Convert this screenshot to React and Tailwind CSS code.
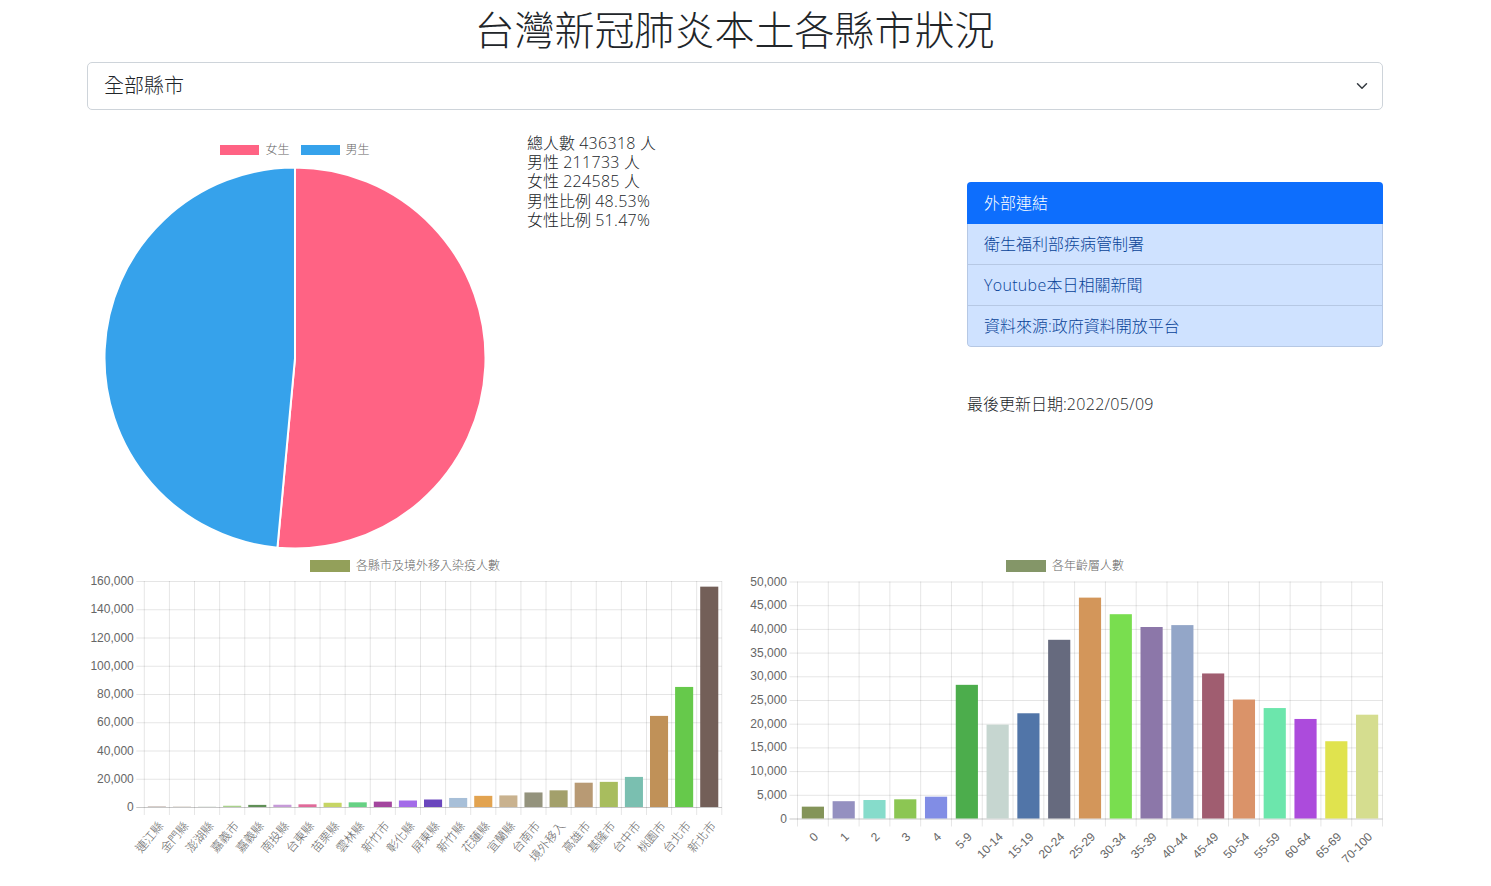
const FONT = "font-['Open_Sans','Noto_Sans_CJK_TC',sans-serif]";

const cityData = [
  ["連江縣", 300, "#a08a80"], ["金門縣", 200, "#b0a090"], ["澎湖縣", 150, "#a0b0a0"], ["嘉義市", 900, "#a9d28c"],
  ["嘉義縣", 1500, "#5f8f56"], ["南投縣", 1600, "#c69ad8"], ["台東縣", 1900, "#e06a9a"], ["苗栗縣", 3000, "#c6d565"],
  ["雲林縣", 3300, "#66d184"], ["新竹市", 3800, "#a3459e"], ["彰化縣", 4600, "#a36be8"], ["屏東縣", 5300, "#6a46bd"],
  ["新竹縣", 6400, "#a7bfd8"], ["花蓮縣", 7900, "#e2a350"], ["宜蘭縣", 8200, "#c9b28f"], ["台南市", 10300, "#94937d"],
  ["境外移入", 11800, "#a3a06b"], ["高雄市", 17200, "#b89a74"], ["基隆市", 17800, "#a8bd5e"], ["台中市", 21300, "#7abfb0"],
  ["桃園市", 64500, "#c09158"], ["台北市", 85000, "#66c94b"], ["新北市", 156000, "#735f58"],
];

const ageData = [
  ["0", 2500, "#849459"], ["1", 3650, "#9490c0"], ["2", 3900, "#86dccb"], ["3", 4050, "#8cc653"],
  ["4", 4600, "#818de5"], ["5-9", 28200, "#4cad4c"], ["10-14", 19800, "#c6d6d0"], ["15-19", 22200, "#5175a8"],
  ["20-24", 37700, "#666a7e"], ["25-29", 46600, "#d3965a"], ["30-34", 43100, "#79de4f"], ["35-39", 40400, "#8c77a9"],
  ["40-44", 40800, "#93a6c8"], ["45-49", 30600, "#a05d70"], ["50-54", 25100, "#da9369"], ["55-59", 23300, "#6ce6ac"],
  ["60-64", 21000, "#ac4bdc"], ["65-69", 16300, "#e0e34e"], ["70-100", 21900, "#d5dd8f"],
];

function Legend({ color, label, boxClass }) {
  return (
    <div className="flex items-center gap-[6px]">
      <span className={boxClass} style={{ backgroundColor: color }} />
      <span className="text-[12px] leading-none font-light text-[#666]">{label}</span>
    </div>
  );
}

function BarChart({ data, max, step, left, right, top, bottom, rotate, labelDx, labelDy, legendColor, legendLabel }) {
  const width = 636;
  const height = 311;
  const slot = (right - left) / data.length;
  const yOf = (v) => bottom - (v / max) * (bottom - top);
  const ticks = [];
  for (let v = 0; v <= max; v += step) ticks.push(v);
  return (
    <div className="flex flex-col">
      <div className="flex h-[20px] items-center justify-center pt-px">
        <Legend color={legendColor} label={legendLabel} boxClass="h-[12px] w-[40px]" />
      </div>
      <svg width={width} height={height} className="block">
        {ticks.map((v) => (
          <g key={v}>
            <line x1={left - 8} x2={right} y1={yOf(v) + 0.5} y2={yOf(v) + 0.5} stroke="#000" strokeOpacity={v === 0 ? 0.22 : 0.1} />
            <text x={left - 10.5} y={yOf(v) + 4} textAnchor="end" className="fill-[#666] text-[12px] font-['Liberation_Sans',sans-serif]">
              {v.toLocaleString("en-US")}
            </text>
          </g>
        ))}
        {data.map((_, i) => (
          <line key={i} x1={left + slot * i} x2={left + slot * i} y1={top} y2={bottom + 8} stroke="#000" strokeOpacity="0.1" />
        ))}
        <line x1={right} x2={right} y1={top} y2={bottom + 8} stroke="#000" strokeOpacity="0.1" />
        {data.map(([label, v, color], i) => {
          const cx = left + slot * (i + 0.5);
          const w = slot * 0.72;
          return (
            <rect key={label} x={cx - w / 2} y={yOf(v)} width={w} height={bottom - yOf(v)} fill={color} />
          );
        })}
        {data.map(([label], i) => {
          const cx = left + slot * (i + 0.5) + labelDx;
          const cy = bottom + labelDy;
          return (
            <text
              key={label}
              x={cx}
              y={cy}
              textAnchor="end"
              transform={`rotate(${rotate} ${cx} ${cy})`}
              className="fill-[#666] text-[12px] font-light font-['Liberation_Sans','Noto_Sans_CJK_TC',sans-serif]"
            >
              {label}
            </text>
          );
        })}
      </svg>
    </div>
  );
}

function Pie() {
  const cx = 208;
  const cy = 198;
  const r = 190.5;
  const a = 2 * Math.PI * 0.5147;
  const ex = cx + r * Math.sin(a);
  const ey = cy - r * Math.cos(a);
  return (
    <svg width="416" height="390" className="block">
      <path d={`M${cx} ${cy} L${cx} ${cy - r} A${r} ${r} 0 1 1 ${ex} ${ey} Z`} fill="#ff6384" stroke="#fff" strokeWidth="2" />
      <path d={`M${cx} ${cy} L${ex} ${ey} A${r} ${r} 0 0 1 ${cx} ${cy - r} Z`} fill="#36a2eb" stroke="#fff" strokeWidth="2" />
    </svg>
  );
}

function Num({ children }) {
  return <span className="tracking-[0.3px]">{children}</span>;
}

export default function App() {
  return (
    <div className={`h-[886px] w-[1491px] overflow-hidden bg-white text-[#212529] ${FONT}`}>
      <div className="ml-[87px] flex w-[1296px] flex-col">
        <h1 className="h-[62px] pr-px text-center text-[40px] leading-[60px] font-light">台灣新冠肺炎本土各縣市狀況</h1>

        <div className="relative h-[48px]">
          <select className={`h-full w-full appearance-none rounded-[5px] border border-[#ced4da] bg-white pl-[16px] text-[20px] font-light text-[#212529] ${FONT}`}>
            <option>全部縣市</option>
          </select>
          <svg viewBox="0 0 16 16" className="pointer-events-none absolute top-[18px] right-[14px] h-[12px] w-[14px]">
            <path d="M2 5l6 6 6-6" fill="none" stroke="#343a40" strokeWidth="2" strokeLinecap="round" strokeLinejoin="round" />
          </svg>
        </div>

        <div className="grid h-[445px] grid-cols-3 gap-x-[24px]">
          <div className="flex flex-col pt-[33px]">
            <div className="flex h-[14px] items-center justify-center gap-[11px]">
              <Legend color="#ff6384" label="女生" boxClass="h-[10px] w-[39px]" />
              <Legend color="#36a2eb" label="男生" boxClass="h-[10px] w-[39px]" />
            </div>
            <div className="mt-[3px]">
              <Pie />
            </div>
          </div>

          <div className="pt-[24px] text-[16px] leading-[19.2px] font-light">
            <p>總人數 <Num>436318</Num> 人</p>
            <p>男性 <Num>211733</Num> 人</p>
            <p>女性 <Num>224585</Num> 人</p>
            <p>男性比例 <Num>48.53%</Num></p>
            <p>女性比例 <Num>51.47%</Num></p>
          </div>

          <div className="flex flex-col pt-[72px]">
            <ul className="overflow-hidden rounded-[4px] text-[16px] leading-[24px] font-light text-[#084298]">
              <li className="bg-[#0d6efd] px-[17px] py-[9px] text-white">外部連結</li>
              <li className="border-x border-b border-[#b6c8e4] bg-[#cfe2ff] px-[16px] py-[8px]">衛生福利部疾病管制署</li>
              <li className="border-x border-b border-[#b6c8e4] bg-[#cfe2ff] px-[16px] py-[8px]"><Num>Youtube</Num>本日相關新聞</li>
              <li className="rounded-b-[4px] border-x border-b border-[#b6c8e4] bg-[#cfe2ff] px-[16px] py-[8px]">資料來源:政府資料開放平台</li>
            </ul>
            <p className="mt-[45px] text-[16px] leading-[24px] font-light">最後更新日期:<Num>2022/05/09</Num></p>
          </div>
        </div>

        <div className="grid grid-cols-2 gap-x-[24px]">
          <BarChart data={cityData} max={160000} step={20000} left={57.3} right={634.8} top={6} bottom={232} rotate={-50} labelDx={7.5} labelDy={19} legendColor="#93a05a" legendLabel="各縣市及境外移入染疫人數" />
          <BarChart data={ageData} max={50000} step={5000} left={50.5} right={635.5} top={6.5} bottom={243.5} rotate={-45} labelDx={6} labelDy={19} legendColor="#849668" legendLabel="各年齡層人數" />
        </div>
      </div>
    </div>
  );
}
